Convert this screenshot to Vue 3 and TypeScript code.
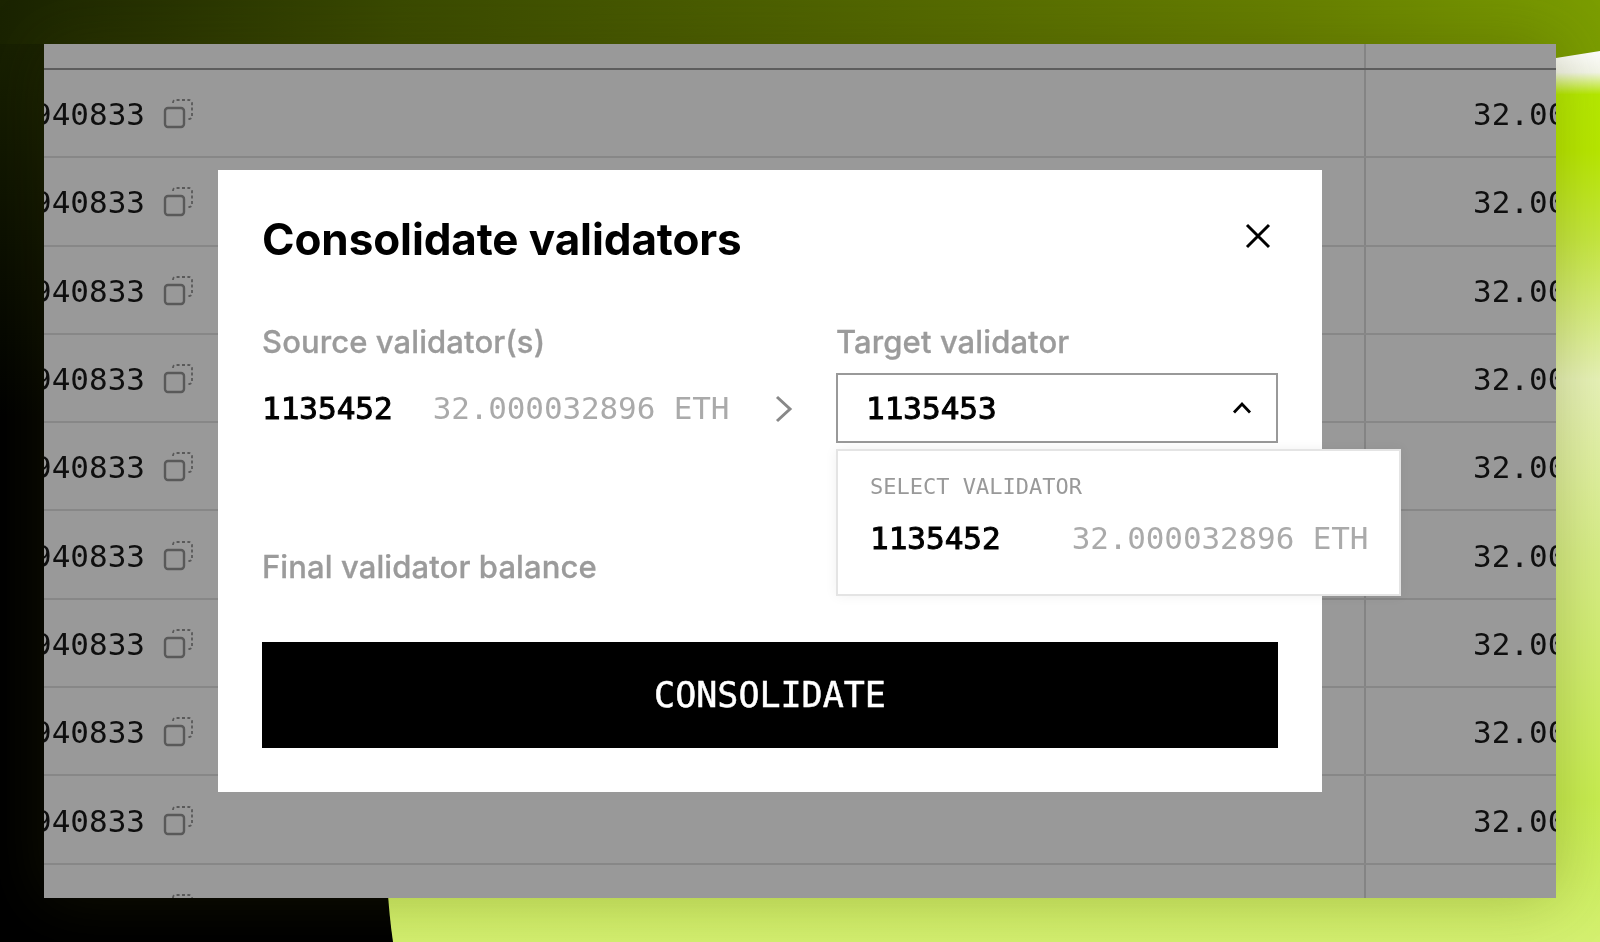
<script setup lang="ts">
import { ref } from "vue";

const rows = Array.from({ length: 10 }, (_, i) => i);
const open = ref(true);
</script>

<template>
  <div class="page">
    <svg class="backdrop" width="1600" height="942" viewBox="0 0 1600 942" aria-hidden="true">
      <defs>
        <linearGradient id="topBand" x1="0" y1="0" x2="1" y2="0">
          <stop offset="0" stop-color="#1a2300" />
          <stop offset="0.25" stop-color="#3a4a00" />
          <stop offset="0.8" stop-color="#667f00" />
          <stop offset="1" stop-color="#7b9d00" />
        </linearGradient>
        <linearGradient id="leftStrip" x1="0" y1="0" x2="0" y2="1">
          <stop offset="0" stop-color="#1a2300" />
          <stop offset="1" stop-color="#000" />
        </linearGradient>
        <linearGradient id="lime" x1="0" y1="0" x2="0" y2="1">
          <stop offset="0" stop-color="#ffffff" />
          <stop offset="0.025" stop-color="#f4f6ea" />
          <stop offset="0.05" stop-color="#b6ea00" />
          <stop offset="0.112" stop-color="#b8e800" />
          <stop offset="0.213" stop-color="#c6e840" />
          <stop offset="0.37" stop-color="#e8f3b8" />
          <stop offset="0.56" stop-color="#d8ee88" />
          <stop offset="0.84" stop-color="#c8ee50" />
          <stop offset="1" stop-color="#d4f070" />
        </linearGradient>
      </defs>
      <rect width="1600" height="942" fill="#000" />
      <path d="M393 942 Q 389 915 387 880 L 387 50 L 1600 50 L 1600 942 Z" fill="url(#lime)" />
      <rect width="44" height="430" fill="url(#leftStrip)" />
      <path d="M0 0 H1600 V51 L1556 58 L1480 44 H0 Z" fill="url(#topBand)" />
    </svg>

    <div class="window">
      <div class="table">
        <div class="table-head">
          <div class="col-main"></div>
          <div class="col-balance"></div>
        </div>
        <div v-for="row in rows" :key="row" class="table-row">
          <div class="col-main">
            <span class="pubkey">940833</span>
            <svg class="copy" width="30" height="30" viewBox="0 0 30 30" fill="none">
              <rect x="2" y="9" width="19" height="19" rx="3" stroke="currentColor" stroke-width="2.4" />
              <path d="M10 4V3.5A2.5 2.5 0 0 1 12.5 1H26A3 3 0 0 1 29 4V17.5A2.5 2.5 0 0 1 26.5 20H25" stroke="currentColor" stroke-width="1.8" stroke-dasharray="3 2.4" />
            </svg>
          </div>
          <div class="col-balance"><span class="balance">32.000032896</span></div>
        </div>
      </div>
      <div class="overlay"></div>

      <div class="modal">
        <div class="modal-head">
          <h2>Consolidate validators</h2>
          <svg class="close" width="26" height="26" viewBox="0 0 26 26" fill="none">
            <path d="M2 2L24 24M24 2L2 24" stroke="#000" stroke-width="3" />
          </svg>
        </div>

        <div class="fields">
          <div class="source">
            <div class="label">Source validator(s)</div>
            <div class="source-line">
              <span class="val-id">1135452</span>
              <span class="val-balance">32.000032896 ETH</span>
              <svg class="arrow" width="18" height="28" viewBox="0 0 18 28" fill="none">
                <path d="M2 2L15 14L2 26" stroke="#888" stroke-width="3" />
              </svg>
            </div>
          </div>
          <div class="target">
            <div class="label">Target validator</div>
            <div class="select">
              <span class="val-id select-id">1135453</span>
              <svg class="caret" width="20" height="13" viewBox="0 0 20 13" fill="none">
                <path d="M2 11.5L10 3L18 11.5" stroke="#000" stroke-width="2.8" />
              </svg>
              <div v-if="open" class="menu">
                <div class="menu-title">SELECT VALIDATOR</div>
                <div class="menu-item">
                  <span class="val-id">1135452</span>
                  <span class="val-balance">32.000032896 ETH</span>
                </div>
              </div>
            </div>
          </div>
        </div>

        <div class="label final">Final validator balance</div>
        <button class="submit">CONSOLIDATE</button>
      </div>
    </div>
  </div>
</template>

<style scoped>
.page {
  position: relative;
  width: 1600px;
  height: 942px;
  overflow: hidden;
  padding: 44px;
  box-sizing: border-box;
  filter: blur(0.6px);
  font-family: "Inter", "Liberation Sans", sans-serif;
}

.backdrop {
  position: absolute;
  inset: 0;
}

.window {
  position: relative;
  width: 1512px;
  height: 854px;
  overflow: hidden;
  background: #fff;
}

.page::after {
  content: "";
  position: absolute;
  left: 44px;
  top: 44px;
  width: 1512px;
  height: 854px;
  box-shadow: 0 0 60px rgba(60, 60, 0, 0.28);
  pointer-events: none;
  z-index: 0;
}

.table-head,
.table-row {
  display: grid;
  grid-template-columns: 1320px 1fr;
}

.table-head {
  height: 24px;
  border-bottom: 2px solid #9c9c9c;
  background: #fff;
}

.table-row {
  height: 88.3px;
  box-sizing: border-box;
  border-bottom: 2px solid #e2e2e2;
  font-family: "DejaVu Sans Mono", monospace;
  font-size: 31px;
  color: #1a1a1a;
}

.col-main {
  display: flex;
  align-items: center;
  gap: 18px;
  overflow: hidden;
}

.col-balance {
  display: flex;
  align-items: center;
  padding-left: 107px;
  border-left: 2px solid #dcdcdc;
  white-space: nowrap;
  overflow: hidden;
}

.pubkey {
  margin-left: -11px;
  margin-top: 2px;
}

.balance {
  margin-top: 2px;
}

.copy {
  color: #949494;
  margin-top: 2px;
}

.overlay {
  position: absolute;
  inset: 0;
  background: rgba(0, 0, 0, 0.4);
}

.modal {
  position: absolute;
  left: 174px;
  top: 126px;
  width: 1104px;
  height: 622px;
  box-sizing: border-box;
  padding: 44px;
  background: #fff;
  display: flex;
  flex-direction: column;
}

.modal-head {
  display: flex;
  justify-content: space-between;
  align-items: flex-start;
  height: 60px;
}

.modal-head h2 {
  margin: 0;
  font-size: 44px;
  line-height: 50px;
  font-weight: 700;
  color: #000;
  letter-spacing: -0.1px;
}

.close {
  margin-top: 9px;
  margin-right: 7px;
}

.fields {
  display: grid;
  grid-template-columns: 574px 442px;
  margin-top: 50px;
}

.label {
  font-size: 31px;
  line-height: 36px;
  font-weight: 500;
  letter-spacing: 0.1px;
  color: #9b9b9b;
  -webkit-text-stroke: 0.3px #9b9b9b;
}

.source-line {
  display: flex;
  align-items: center;
  height: 70px;
  margin-top: 13px;
}

.val-id {
  font-family: "DejaVu Sans Mono", monospace;
  font-size: 31px;
  font-weight: 400;
  -webkit-text-stroke: 1px #000;
  color: #000;
}

.select-id {
  margin-top: 0;
}

.caret {
  margin-top: -2px;
  margin-right: -1px;
}

.val-balance {
  font-family: "DejaVu Sans Mono", monospace;
  font-size: 31px;
  letter-spacing: -0.12px;
  color: #aaa;
  margin-left: 40px;
  white-space: nowrap;
}

.arrow {
  margin-left: 46px;
  margin-top: 2px;
}

.select {
  position: relative;
  display: flex;
  align-items: center;
  justify-content: space-between;
  height: 70px;
  margin-top: 13px;
  padding: 0 25px 0 28px;
  box-sizing: border-box;
  border: 2px solid #999;
}

.menu {
  position: absolute;
  left: -2px;
  top: 74px;
  width: 565px;
  height: 147px;
  box-sizing: border-box;
  padding: 22px 32px;
  background: #fff;
  border: 2px solid #e4e4e4;
  box-shadow: 0 0 12px rgba(0, 0, 0, 0.06);
  z-index: 2;
}

.menu-title {
  font-family: "DejaVu Sans Mono", monospace;
  font-size: 22px;
  line-height: 28px;
  color: #999;
}

.menu-item {
  display: flex;
  align-items: center;
  margin-top: 19px;
}

.menu-item .val-balance {
  margin-left: 71px;
}

.final {
  margin-top: 106px;
}

.submit {
  margin-top: 57px;
  height: 106px;
  width: 1016px;
  flex: none;
  border: 0;
  background: #000;
  color: #fff;
  font-family: "DejaVu Sans Mono", monospace;
  font-size: 35px;
  -webkit-text-stroke: 0.5px #fff;
}
</style>
